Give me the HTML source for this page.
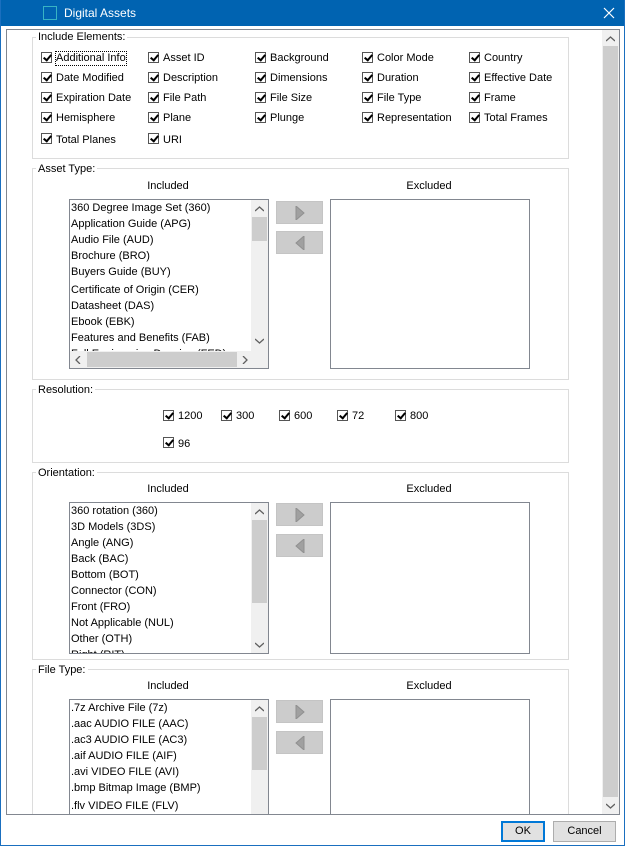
<!DOCTYPE html>
<html><head><style>
*{margin:0;padding:0;box-sizing:border-box}
body{width:625px;height:846px;background:#fff;font-family:"Liberation Sans",Tahoma,sans-serif;font-size:11px;color:#000;position:relative;overflow:hidden}
.a{position:absolute}
#frame{left:0;top:0;width:625px;height:846px;border:1px solid #1a6fbf;border-top:none}
#title{left:0;top:0;width:625px;height:26px;background:#0063b1;color:#fff;font-size:12px}
#scroll{left:6px;top:29px;width:614px;height:786px;border:1px solid #828790;overflow:hidden;background:#fff}
fieldset{position:absolute;border:1px solid #dcdcdc;}
.lg{position:absolute;background:#fff;padding:0 2px;font-size:11px;line-height:12px}
.cb{position:absolute;width:11px;height:11px;border:1px solid #555;background:#fff}
.cb:after{content:"";position:absolute;left:2.5px;top:0px;width:3px;height:6px;border:solid #000;border-width:0 2px 2px 0;transform:rotate(40deg)}
.cl{position:absolute;font-size:11px;line-height:13px}
.lb{position:absolute;border:1px solid #828790;background:#fff;overflow:hidden}
.it{position:absolute;left:1px;font-size:11px;line-height:16px;white-space:nowrap}
.vs{position:absolute;right:0;top:0;width:17px;bottom:0;background:#f0f0f0}
.th{position:absolute;left:1px;width:15px;background:#cdcdcd}
.btn{position:absolute;width:47px;height:23px;background:#cccccc;border:1px solid #c4c4c4}
.hd{position:absolute;font-size:11px;text-align:center;width:200px}
.ch{position:absolute;left:4px}
</style></head><body>
<div id="title" class="a">
 <div class="a" style="left:43px;top:6px;width:14px;height:14px;border:1px solid #38b3c4"></div>
 <div class="a" style="left:64px;top:6px">Digital Assets</div>
 <svg class="a" style="left:603px;top:7px" width="12" height="12"><path d="M1 1L11 11M11 1L1 11" stroke="#fff" stroke-width="1.2"/></svg>
</div>
<div id="frame" class="a"></div>

<div id="scroll" class="a">
<div style="position:absolute;left:-7px;top:-30px;width:625px;height:846px">

<fieldset style="left:32px;top:37px;width:537px;height:122px"></fieldset>
<div class="lg" style="left:36px;top:31px">Include Elements:</div>

<fieldset style="left:32px;top:168px;width:537px;height:212px"></fieldset>
<div class="lg" style="left:36px;top:163px">Asset Type:</div>

<fieldset style="left:32px;top:389px;width:537px;height:74px"></fieldset>
<div class="lg" style="left:36px;top:384px">Resolution:</div>

<fieldset style="left:32px;top:472px;width:537px;height:188px"></fieldset>
<div class="lg" style="left:36px;top:467px">Orientation:</div>

<fieldset style="left:32px;top:669px;width:537px;height:200px"></fieldset>
<div class="lg" style="left:36px;top:664px">File Type:</div>

<div class="cb" style="left:41px;top:52px"></div><div class="cl" style="left:56px;top:52px;outline:1px dotted #000">Additional Info</div>
<div class="cb" style="left:148px;top:52px"></div><div class="cl" style="left:163px;top:52px">Asset ID</div>
<div class="cb" style="left:255px;top:52px"></div><div class="cl" style="left:270px;top:52px">Background</div>
<div class="cb" style="left:362px;top:52px"></div><div class="cl" style="left:377px;top:52px">Color Mode</div>
<div class="cb" style="left:469px;top:52px"></div><div class="cl" style="left:484px;top:52px">Country</div>

<div class="cb" style="left:41px;top:72px"></div><div class="cl" style="left:56px;top:72px">Date Modified</div>
<div class="cb" style="left:148px;top:72px"></div><div class="cl" style="left:163px;top:72px">Description</div>
<div class="cb" style="left:255px;top:72px"></div><div class="cl" style="left:270px;top:72px">Dimensions</div>
<div class="cb" style="left:362px;top:72px"></div><div class="cl" style="left:377px;top:72px">Duration</div>
<div class="cb" style="left:469px;top:72px"></div><div class="cl" style="left:484px;top:72px">Effective Date</div>

<div class="cb" style="left:41px;top:92px"></div><div class="cl" style="left:56px;top:92px">Expiration Date</div>
<div class="cb" style="left:148px;top:92px"></div><div class="cl" style="left:163px;top:92px">File Path</div>
<div class="cb" style="left:255px;top:92px"></div><div class="cl" style="left:270px;top:92px">File Size</div>
<div class="cb" style="left:362px;top:92px"></div><div class="cl" style="left:377px;top:92px">File Type</div>
<div class="cb" style="left:469px;top:92px"></div><div class="cl" style="left:484px;top:92px">Frame</div>

<div class="cb" style="left:41px;top:112px"></div><div class="cl" style="left:56px;top:112px">Hemisphere</div>
<div class="cb" style="left:148px;top:112px"></div><div class="cl" style="left:163px;top:112px">Plane</div>
<div class="cb" style="left:255px;top:112px"></div><div class="cl" style="left:270px;top:112px">Plunge</div>
<div class="cb" style="left:362px;top:112px"></div><div class="cl" style="left:377px;top:112px">Representation</div>
<div class="cb" style="left:469px;top:112px"></div><div class="cl" style="left:484px;top:112px">Total Frames</div>

<div class="cb" style="left:41px;top:133px"></div><div class="cl" style="left:56px;top:134px">Total Planes</div>
<div class="cb" style="left:148px;top:133px"></div><div class="cl" style="left:163px;top:134px">URI</div>

<div class="hd" style="left:68px;top:180px">Included</div>
<div class="hd" style="left:329px;top:180px">Excluded</div>
<div class="lb" style="left:69px;top:199px;width:200px;height:170px">
 <div class="it" style="top:0">360 Degree Image Set (360)</div>
 <div class="it" style="top:16px">Application Guide (APG)</div>
 <div class="it" style="top:32px">Audio File (AUD)</div>
 <div class="it" style="top:48px">Brochure (BRO)</div>
 <div class="it" style="top:64px">Buyers Guide (BUY)</div>
 <div class="it" style="top:82px">Certificate of Origin (CER)</div>
 <div class="it" style="top:98px">Datasheet (DAS)</div>
 <div class="it" style="top:114px">Ebook (EBK)</div>
 <div class="it" style="top:130px">Features and Benefits (FAB)</div>
 <div class="it" style="top:146px">Full Engineering Drawing (FED)</div>
 <div class="a" style="left:0;top:151px;width:198px;height:17px;background:#f0f0f0"><div class="a" style="left:17px;top:1px;width:150px;height:15px;background:#cdcdcd"></div>
  <svg class="a" style="left:5px;top:5px" width="6" height="8"><path d="M5 0L1 4L5 8" fill="none" stroke="#606060" stroke-width="1.3"/></svg>
  <svg class="a" style="left:172px;top:5px" width="6" height="8"><path d="M1 0L5 4L1 8" fill="none" stroke="#606060" stroke-width="1.3"/></svg></div>
 <div class="vs" style="bottom:17px"><div class="th" style="top:17px;height:24px"></div>
  <svg class="ch" style="top:6px" width="9" height="6"><path d="M0 5L4.5 1L9 5" fill="none" stroke="#606060" stroke-width="1.3"/></svg>
  <svg class="ch" style="top:138px" width="9" height="6"><path d="M0 1L4.5 5L9 1" fill="none" stroke="#606060" stroke-width="1.3"/></svg></div>
</div>
<div class="btn" style="left:276px;top:201px"><svg class="a" style="left:18px;top:4px" width="10" height="14"><path d="M1 0L9 7L1 14Z" fill="#a0a0a0" stroke="#909090"/></svg></div>
<div class="btn" style="left:276px;top:231px"><svg class="a" style="left:18px;top:4px" width="10" height="14"><path d="M9 0L1 7L9 14Z" fill="#a0a0a0" stroke="#909090"/></svg></div>
<div class="lb" style="left:330px;top:199px;width:200px;height:170px"></div>

<div class="cb" style="left:163px;top:410px"></div><div class="cl" style="left:178px;top:410px">1200</div>
<div class="cb" style="left:221px;top:410px"></div><div class="cl" style="left:236px;top:410px">300</div>
<div class="cb" style="left:279px;top:410px"></div><div class="cl" style="left:294px;top:410px">600</div>
<div class="cb" style="left:337px;top:410px"></div><div class="cl" style="left:352px;top:410px">72</div>
<div class="cb" style="left:395px;top:410px"></div><div class="cl" style="left:410px;top:410px">800</div>
<div class="cb" style="left:163px;top:437px"></div><div class="cl" style="left:178px;top:438px">96</div>

<div class="hd" style="left:68px;top:483px">Included</div>
<div class="hd" style="left:329px;top:483px">Excluded</div>
<div class="lb" style="left:69px;top:502px;width:200px;height:152px">
 <div class="it" style="top:0">360 rotation (360)</div>
 <div class="it" style="top:16px">3D Models (3DS)</div>
 <div class="it" style="top:32px">Angle (ANG)</div>
 <div class="it" style="top:48px">Back (BAC)</div>
 <div class="it" style="top:64px">Bottom (BOT)</div>
 <div class="it" style="top:80px">Connector (CON)</div>
 <div class="it" style="top:96px">Front (FRO)</div>
 <div class="it" style="top:112px">Not Applicable (NUL)</div>
 <div class="it" style="top:128px">Other (OTH)</div>
 <div class="it" style="top:144px">Right (RIT)</div>
 <div class="vs"><div class="th" style="top:17px;height:83px"></div>
  <svg class="ch" style="top:6px" width="9" height="6"><path d="M0 5L4.5 1L9 5" fill="none" stroke="#606060" stroke-width="1.3"/></svg>
  <svg class="ch" style="top:139px" width="9" height="6"><path d="M0 1L4.5 5L9 1" fill="none" stroke="#606060" stroke-width="1.3"/></svg></div>
</div>
<div class="btn" style="left:276px;top:503px"><svg class="a" style="left:18px;top:4px" width="10" height="14"><path d="M1 0L9 7L1 14Z" fill="#a0a0a0" stroke="#909090"/></svg></div>
<div class="btn" style="left:276px;top:534px"><svg class="a" style="left:18px;top:4px" width="10" height="14"><path d="M9 0L1 7L9 14Z" fill="#a0a0a0" stroke="#909090"/></svg></div>
<div class="lb" style="left:330px;top:502px;width:200px;height:152px"></div>

<div class="hd" style="left:68px;top:680px">Included</div>
<div class="hd" style="left:329px;top:680px">Excluded</div>
<div class="lb" style="left:69px;top:699px;width:200px;height:152px">
 <div class="it" style="top:0">.7z Archive File (7z)</div>
 <div class="it" style="top:16px">.aac AUDIO FILE (AAC)</div>
 <div class="it" style="top:32px">.ac3 AUDIO FILE (AC3)</div>
 <div class="it" style="top:48px">.aif AUDIO FILE (AIF)</div>
 <div class="it" style="top:64px">.avi VIDEO FILE (AVI)</div>
 <div class="it" style="top:80px">.bmp Bitmap Image (BMP)</div>
 <div class="it" style="top:98px">.flv VIDEO FILE (FLV)</div>
 <div class="vs"><div class="th" style="top:17px;height:53px"></div>
  <svg class="ch" style="top:6px" width="9" height="6"><path d="M0 5L4.5 1L9 5" fill="none" stroke="#606060" stroke-width="1.3"/></svg></div>
</div>
<div class="btn" style="left:276px;top:700px"><svg class="a" style="left:18px;top:4px" width="10" height="14"><path d="M1 0L9 7L1 14Z" fill="#a0a0a0" stroke="#909090"/></svg></div>
<div class="btn" style="left:276px;top:731px"><svg class="a" style="left:18px;top:4px" width="10" height="14"><path d="M9 0L1 7L9 14Z" fill="#a0a0a0" stroke="#909090"/></svg></div>
<div class="lb" style="left:330px;top:699px;width:200px;height:152px"></div>

<div class="a" style="left:602px;top:30px;width:17px;height:784px;background:#f0f0f0">
 <div class="a" style="left:1px;top:16px;width:15px;height:751px;background:#cdcdcd"></div>
 <svg class="a" style="left:4px;top:6px" width="9" height="6"><path d="M0 5L4.5 1L9 5" fill="none" stroke="#606060" stroke-width="1.3"/></svg>
 <svg class="a" style="left:4px;top:773px" width="9" height="6"><path d="M0 1L4.5 5L9 1" fill="none" stroke="#606060" stroke-width="1.3"/></svg>
</div>
</div>
</div>

<div class="a" style="left:501px;top:821px;width:44px;height:21px;border:2px solid #0078d7;background:#e1e1e1;text-align:center;line-height:17px">OK</div>
<div class="a" style="left:553px;top:821px;width:63px;height:21px;border:1px solid #adadad;background:#e1e1e1;text-align:center;line-height:19px">Cancel</div>
</body></html>
